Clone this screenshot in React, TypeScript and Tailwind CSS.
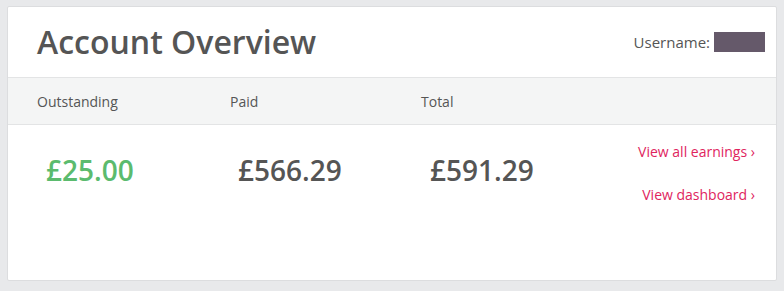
export default function App() {
  const font = { fontFamily: '"Open Sans", sans-serif' };
  return (
    <div className="h-[291px] w-[784px] bg-[#e8e9eb] pt-[6px] pl-[7px]" style={font}>
      <div className="flex h-[275px] w-[770px] flex-col rounded-[2px] border border-[#dcdddf] bg-white">
        <header className="flex h-[70px] items-center justify-between pl-[29px] pr-[11px]">
          <h1 className="text-[32px] font-semibold leading-none text-[#555555]">Account Overview</h1>
          <div className="flex items-center text-[15px] text-[#555555]">
            <span>Username:</span>
            <span className="ml-[4px] inline-block h-[20px] w-[51px] bg-[#65596a]" />
          </div>
        </header>
        <div className="flex h-[48px] items-center border-y border-[#e3e4e5] bg-[#f4f5f5] pl-[29px] text-[14px] text-[#555555]">
          <div className="w-[193px]">Outstanding</div>
          <div className="w-[191px]">Paid</div>
          <div>Total</div>
        </div>
        <div className="flex flex-1 pl-[38px] pr-[21px]">
          <div className="flex pt-[31px] text-[28px] font-semibold leading-none">
            <div className="w-[192px] text-[#5bbb6e]">£25.00</div>
            <div className="w-[192px] text-[#555555]">£566.29</div>
            <div className="text-[#555555]">£591.29</div>
          </div>
          <div className="ml-auto flex flex-col items-end gap-[23px] pt-[17px] text-[14px] leading-[20px] text-[#e0245e]">
            <a href="#">View all earnings ›</a>
            <a href="#">View dashboard ›</a>
          </div>
        </div>
      </div>
    </div>
  );
}
